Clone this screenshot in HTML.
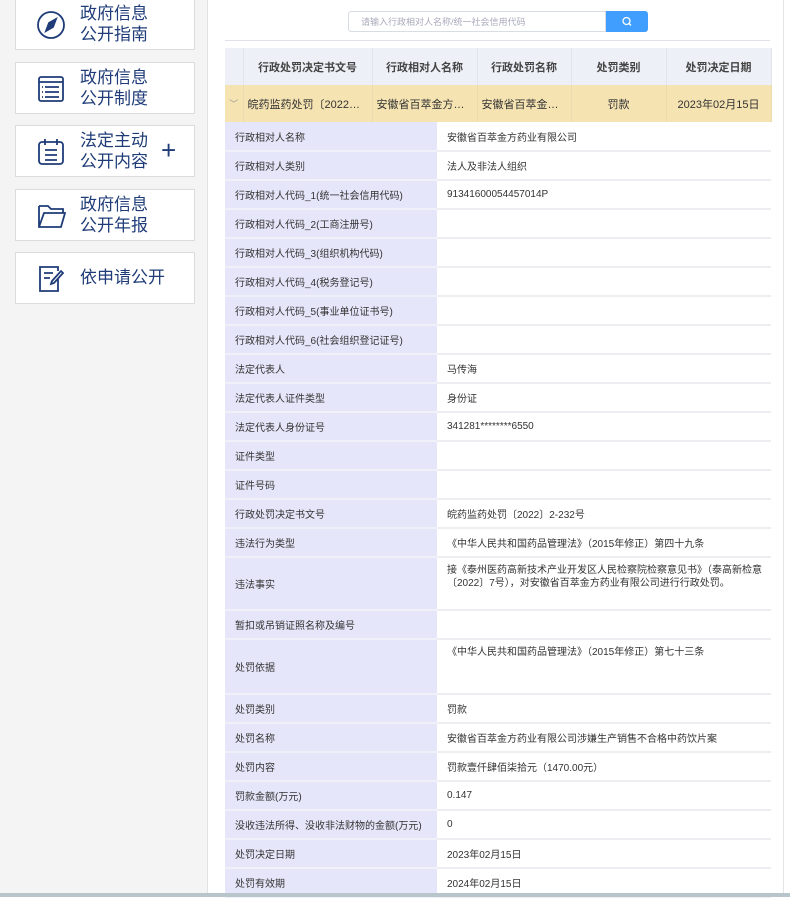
<!DOCTYPE html>
<html><head><meta charset="utf-8"><style>
*{margin:0;padding:0;box-sizing:border-box}
body{width:790px;height:897px;overflow:hidden;background:#fff;font-family:"Liberation Sans","Noto Sans CJK SC",sans-serif;position:relative}
.side{position:absolute;left:0;top:0;width:208px;height:897px;background:#f4f4f4;border-right:1px solid #e2e2e2}
.card{position:absolute;left:15px;width:180px;height:52px;background:#fff;border:1px solid #dcdcdc}
.card svg{position:absolute;left:20px;top:11px}
.card .t{position:absolute;left:64px;top:4px;font-size:17px;line-height:21px;color:#1f3c78}
.card .plus{position:absolute;left:145px;top:11px;font-size:26px;color:#1f3c78;font-weight:300;line-height:26px}
.search{position:absolute;left:348px;top:11px;width:258px;height:21px;border:1px solid #d8dce3;border-radius:3px 0 0 3px;font-size:9px;color:#aab;padding:3px 12px}
.btn{position:absolute;left:606px;top:11px;width:42px;height:21px;background:#409eff;border-radius:0 3px 3px 0}
.hr{position:absolute;left:225px;top:40px;width:545px;height:1px;background:#dfe2e8}
table{position:absolute;left:225px;top:48px;width:546px;border-collapse:collapse;table-layout:fixed;font-size:10px;color:#333}
th{background:#edf0f6;height:37px;font-weight:bold;font-size:11px;color:#444;border-right:1px solid #e2e5ec}
.sel td{background:#f5e3b2;height:37px;text-align:center;border-right:1px solid #eadbb0;white-space:nowrap;overflow:hidden;text-overflow:ellipsis;font-size:11px;padding:0 4px}
td.l{background:#e6e6fa;padding-left:10px;border-bottom:2px solid #f0f0f8}
td.v{padding-left:10px;border-bottom:2px solid #eeeef2}
.d td{height:29px;vertical-align:middle}
.d td.top{vertical-align:top;padding-top:6px;line-height:13px}
.bottom{position:absolute;left:0;top:893px;width:790px;height:4px;background:#b8c6cc}
.vline{position:absolute;left:783px;top:0;width:1px;height:893px;background:#e4e4e4}
</style></head><body>
<div class="side">
<div class="card" style="top:-2px"><svg width="30" height="30" viewBox="0 0 30 30" fill="none" stroke="#1f3c78" stroke-width="1.8"><circle cx="15" cy="15" r="13"/><path d="M20 9l-3 8-7 4 3-8z" fill="#1f3c78"/></svg><div class="t">政府信息<br>公开指南</div></div>
<div class="card" style="top:62px"><svg width="30" height="30" viewBox="0 0 30 30" fill="none" stroke="#1f3c78" stroke-width="1.8"><rect x="3" y="3" width="24" height="24" rx="2"/><path d="M3 8h24M9 13h14M9 18h14M9 23h14M6 13h1M6 18h1M6 23h1"/></svg><div class="t">政府信息<br>公开制度</div></div>
<div class="card" style="top:125px"><svg width="30" height="30" viewBox="0 0 30 30" fill="none" stroke="#1f3c78" stroke-width="1.8"><rect x="3" y="5" width="24" height="22" rx="3"/><path d="M9 2v6M21 2v6M9 13h12M9 18h12M9 23h12"/></svg><div class="t">法定主动<br>公开内容</div><div class="plus">+</div></div>
<div class="card" style="top:189px"><svg width="30" height="30" viewBox="0 0 30 30" fill="none" stroke="#1f3c78" stroke-width="1.8"><path d="M3 5h9l3 3h12v4M3 5v21h22l4-14H8L3 26"/></svg><div class="t">政府信息<br>公开年报</div></div>
<div class="card" style="top:252px"><svg width="30" height="30" viewBox="0 0 30 30" fill="none" stroke="#1f3c78" stroke-width="1.8"><path d="M22 14v13H4V3h18v4M8 9h9M8 14h6M27 9l-9 10-3 1 1-3 9-10z"/></svg><div class="t" style="top:14px">依申请公开</div></div>
</div>
<div class="vline"></div>
<div class="search">请输入行政相对人名称/统一社会信用代码</div>
<div class="btn"><svg width="42" height="21" viewBox="0 0 42 21" fill="none" stroke="#fff" stroke-width="1.3"><circle cx="20.5" cy="10" r="3.5"/><path d="M23 12.5l2 2"/></svg></div>
<div class="hr"></div>
<table>
<colgroup><col style="width:18px"><col style="width:129px"><col style="width:105px"><col style="width:94px"><col style="width:95px"><col style="width:105px"></colgroup>
<tr><th></th><th>行政处罚决定书文号</th><th>行政相对人名称</th><th>行政处罚名称</th><th>处罚类别</th><th>处罚决定日期</th></tr>
<tr class="sel"><td style="color:#999;font-size:9px">﹀</td><td>皖药监药处罚〔2022〕2-232号</td><td>安徽省百萃金方药业有限公司</td><td>安徽省百萃金方药业</td><td>罚款</td><td>2023年02月15日</td></tr>
</table>
<table style="top:122px">
<colgroup><col style="width:212px"><col></colgroup>
<tbody class="d">
<tr><td class="l">行政相对人名称</td><td class="v">安徽省百萃金方药业有限公司</td></tr>
<tr><td class="l">行政相对人类别</td><td class="v">法人及非法人组织</td></tr>
<tr><td class="l">行政相对人代码_1(统一社会信用代码)</td><td class="v">91341600054457014P</td></tr>
<tr><td class="l">行政相对人代码_2(工商注册号)</td><td class="v"></td></tr>
<tr><td class="l">行政相对人代码_3(组织机构代码)</td><td class="v"></td></tr>
<tr><td class="l">行政相对人代码_4(税务登记号)</td><td class="v"></td></tr>
<tr><td class="l">行政相对人代码_5(事业单位证书号)</td><td class="v"></td></tr>
<tr><td class="l">行政相对人代码_6(社会组织登记证号)</td><td class="v"></td></tr>
<tr><td class="l">法定代表人</td><td class="v">马传海</td></tr>
<tr><td class="l">法定代表人证件类型</td><td class="v">身份证</td></tr>
<tr><td class="l">法定代表人身份证号</td><td class="v">341281********6550</td></tr>
<tr><td class="l">证件类型</td><td class="v"></td></tr>
<tr><td class="l">证件号码</td><td class="v"></td></tr>
<tr><td class="l">行政处罚决定书文号</td><td class="v">皖药监药处罚〔2022〕2-232号</td></tr>
<tr><td class="l">违法行为类型</td><td class="v">《中华人民共和国药品管理法》（2015年修正）第四十九条</td></tr>
<tr><td class="l" style="height:53px">违法事实</td><td class="v top" style="height:53px">接《泰州医药高新技术产业开发区人民检察院检察意见书》（泰高新检意〔2022〕7号），对安徽省百萃金方药业有限公司进行行政处罚。</td></tr>
<tr><td class="l">暂扣或吊销证照名称及编号</td><td class="v"></td></tr>
<tr><td class="l" style="height:55px">处罚依据</td><td class="v top" style="height:55px">《中华人民共和国药品管理法》（2015年修正）第七十三条</td></tr>
<tr><td class="l">处罚类别</td><td class="v">罚款</td></tr>
<tr><td class="l">处罚名称</td><td class="v">安徽省百萃金方药业有限公司涉嫌生产销售不合格中药饮片案</td></tr>
<tr><td class="l">处罚内容</td><td class="v">罚款壹仟肆佰柒拾元（1470.00元）</td></tr>
<tr><td class="l">罚款金额(万元)</td><td class="v">0.147</td></tr>
<tr><td class="l">没收违法所得、没收非法财物的金额(万元)</td><td class="v">0</td></tr>
<tr><td class="l">处罚决定日期</td><td class="v">2023年02月15日</td></tr>
<tr><td class="l">处罚有效期</td><td class="v">2024年02月15日</td></tr>
</tbody></table>
<div class="bottom"></div>
</body></html>
